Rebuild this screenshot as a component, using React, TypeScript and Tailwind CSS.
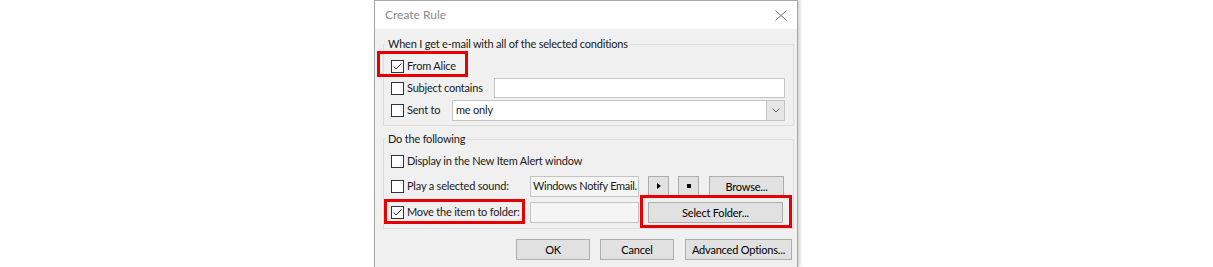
import React from 'react';

function CheckBox({ checked = false }: { checked?: boolean }) {
  return (
    <span className="w-[13px] h-[13px] shrink-0 border border-[#333333] bg-white flex items-center justify-center">
      {checked && (
        <svg width="11" height="11" viewBox="0 0 11 11">
          <path d="M1.5 5.5 L4 8 L9.5 2.5" fill="none" stroke="#333333" strokeWidth="1" />
        </svg>
      )}
    </span>
  );
}

function Button({ children, className = '' }: { children?: React.ReactNode; className?: string }) {
  return (
    <div
      className={`h-[21px] bg-[#e1e1e1] border border-[#adadad] flex items-center justify-center text-black leading-none whitespace-nowrap ${className}`}
    >
      {children}
    </div>
  );
}

function RedBox({ className }: { className: string }) {
  return <span className={`absolute border-[3px] border-[#e60000] pointer-events-none ${className}`} />;
}

export default function App() {
  return (
    <div className="w-[1213px] h-[267px] bg-white flex overflow-hidden font-['Lato',sans-serif] text-[11px] tracking-[-0.2px] text-[#1a1a1a] whitespace-nowrap">
      <div className="ml-[374px] w-[424px] h-full flex flex-col border-x border-t border-[#a6a6a6] shadow-[2px_0_3px_rgba(0,0,0,0.18)]">
        {/* title bar */}
        <div className="h-[28px] bg-white flex items-center justify-between pl-[10px] pr-[9px] shrink-0">
          <span className="text-[12px] tracking-normal text-[#8a8a8a]">Create Rule</span>
          <svg width="12" height="11" viewBox="0 0 12 11" className="mr-[1px]">
            <path d="M0.5 0.5 L11.5 10.5 M11.5 0.5 L0.5 10.5" stroke="#777777" strokeWidth="1" fill="none" />
          </svg>
        </div>

        <div className="flex-1 bg-[#f0f0f0] pt-[7px] pl-[8px] pr-[3px] flex flex-col">
          {/* conditions */}
          <fieldset className="border border-[#dcdcdc]">
            <legend className="ml-[2px] px-[2px] leading-4 h-4">When I get e-mail with all of the selected conditions</legend>
            <div className="pt-[3px] pb-[3px] pl-[7px] pr-[8px] flex flex-col">
              <div className="h-[22px] flex items-center relative">
                <RedBox className="-left-[14px] w-[91px] -top-[4px] bottom-0" />
                <CheckBox checked />
                <span className="ml-[3px]">From Alice</span>
              </div>
              <div className="h-[22px] flex items-center">
                <CheckBox />
                <span className="ml-[3px]">Subject contains</span>
                <div className="ml-auto w-[291px] h-[20px] bg-white border border-[#c4c4c4]" />
              </div>
              <div className="h-[23px] flex items-center">
                <CheckBox />
                <span className="ml-[3px]">Sent to</span>
                <div className="ml-auto w-[333px] h-[21px] bg-white border border-[#c4c4c4] flex items-center">
                  <span className="pl-[3px] flex-1">me only</span>
                  <div className="w-[18px] h-[19px] bg-[#e6e6e6] border-l border-[#c4c4c4] flex items-center justify-center">
                    <svg width="8" height="5" viewBox="0 0 8 5">
                      <path d="M0.5 0.5 L4 4 L7.5 0.5" stroke="#606060" strokeWidth="1" fill="none" />
                    </svg>
                  </div>
                </div>
              </div>
            </div>
          </fieldset>

          {/* actions */}
          <fieldset className="border border-[#dcdcdc] mt-[5px]">
            <legend className="ml-[2px] px-[2px] leading-4 h-4">Do the following</legend>
            <div className="pt-[3px] pb-[5px] pl-[7px] pr-[8px] flex flex-col">
              <div className="h-[22px] flex items-center">
                <CheckBox />
                <span className="ml-[3px]">Display in the New Item Alert window</span>
              </div>
              <div className="h-[22px] mt-[3px] flex items-center">
                <div className="w-[139px] shrink-0 flex items-center">
                  <CheckBox />
                  <span className="ml-[3px]">Play a selected sound:</span>
                </div>
                <div className="w-[109px] shrink-0 h-[21px] bg-[#f5f5f5] border border-[#c4c4c4] flex items-center pl-[2px] overflow-hidden tracking-[-0.3px]">
                  Windows Notify Email.
                </div>
                <Button className="ml-[9px] w-[21px]">
                  <svg width="4" height="6" viewBox="0 0 4 6">
                    <path d="M0 0 L4 3 L0 6 Z" fill="#000" />
                  </svg>
                </Button>
                <Button className="ml-[9px] w-[21px]">
                  <span className="w-[4px] h-[4px] bg-black" />
                </Button>
                <Button className="ml-[10px] w-[75px]">Browse...</Button>
              </div>
              <div className="h-[22px] mt-[4px] flex items-center">
                <div className="w-[139px] shrink-0 flex items-center relative h-full">
                  <RedBox className="-left-[7px] right-[5px] -top-[2px] -bottom-[1px]" />
                  <CheckBox checked />
                  <span className="ml-[3px]">Move the item to folder:</span>
                </div>
                <div className="w-[109px] shrink-0 h-[21px] bg-[#f5f5f5] border border-[#c4c4c4]" />
                <div className="ml-[9px] relative">
                  <RedBox className="-left-[8px] -right-[9px] -top-[7px] -bottom-[5px]" />
                  <Button className="w-[135px]">Select Folder...</Button>
                </div>
              </div>
            </div>
          </fieldset>

          {/* dialog buttons */}
          <div className="mt-[10px] pr-[2px] flex justify-end gap-[10px]">
            <Button className="w-[74px]">OK</Button>
            <Button className="w-[74px]">Cancel</Button>
            <Button className="w-[107px] ml-[1px]">Advanced Options...</Button>
          </div>
        </div>
      </div>
    </div>
  );
}
